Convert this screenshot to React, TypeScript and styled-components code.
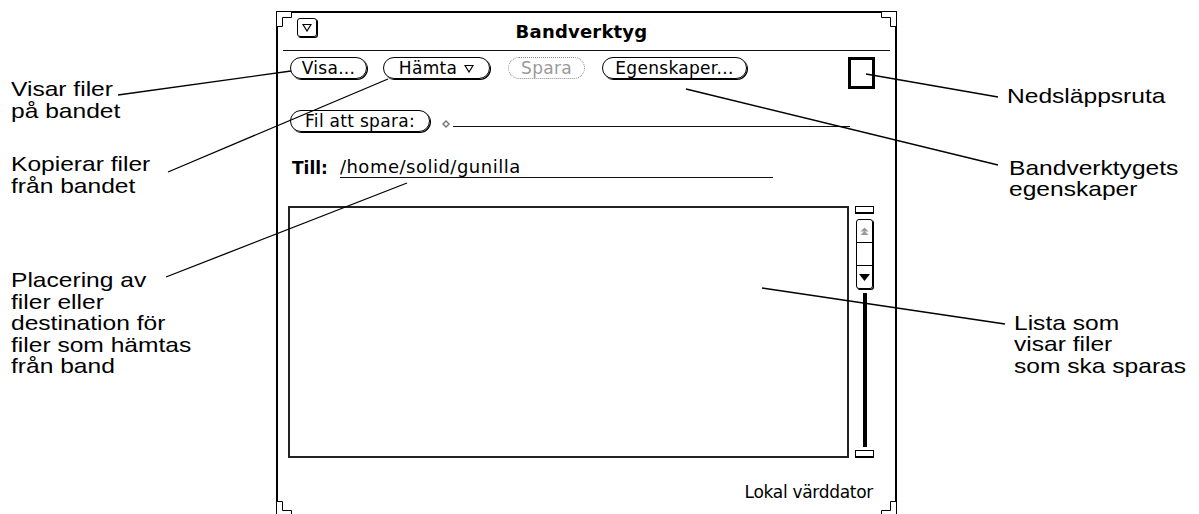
import React from 'react';
import styled, { createGlobalStyle } from 'styled-components';

const GlobalStyle = createGlobalStyle`
  html, body {
    margin: 0;
    padding: 0;
    background: #ffffff;
  }
  #root {
    width: 1199px;
    height: 514px;
    overflow: hidden;
  }
`;

const Page = styled.div`
  position: relative;
  display: grid;
  grid-template-columns: 276px 621px 1fr;
  align-items: start;
  width: 1199px;
  height: 514px;
  overflow: hidden;
  background: #fff;
  color: #000;
`;

/* callout texts left and right of the window */
const NoteColumn = styled.div<{ $pad: number }>`
  display: flex;
  flex-direction: column;
  align-items: flex-start;
  padding-left: ${(p) => p.$pad}px;
  font-family: 'Liberation Sans', Arial, Helvetica, sans-serif;
  font-size: 21px;
  line-height: 21.5px;
`;

const Note = styled.div<{ $top: number; $indent?: number }>`
  margin-top: ${(p) => p.$top}px;
  margin-left: ${(p) => p.$indent ?? 0}px;
  white-space: nowrap;
  transform: scaleX(1.17);
  transform-origin: left top;
`;

/* the OpenLook window */
const Window = styled.div`
  position: relative;
  box-sizing: border-box;
  margin-top: 11px;
  height: 506px;
  border: 2px solid #000;
  display: flex;
  flex-direction: column;
  font-family: 'DejaVu Sans', 'Liberation Sans', sans-serif;
  font-size: 17px;
  line-height: 20px;
`;

const Corner = styled.svg<{ $x: 'left' | 'right'; $y: 'top' | 'bottom' }>`
  position: absolute;
  width: 16px;
  height: 16px;
  ${(p) => (p.$x === 'left' ? 'left: -2px;' : 'right: -2px;')}
  ${(p) => (p.$y === 'top' ? 'top: -2px;' : 'bottom: -2px;')}
  transform: scale(${(p) => (p.$x === 'left' ? 1 : -1)}, ${(p) => (p.$y === 'top' ? 1 : -1)});
`;

const TitleBar = styled.div`
  display: grid;
  grid-template-columns: 60px 1fr 70px;
  align-items: start;
  height: 37px;
  box-sizing: border-box;
  padding-top: 5px;
`;

const MenuButton = styled.div`
  margin-left: 19px;
  width: 20px;
  height: 19px;
  box-sizing: border-box;
  border: 1px solid #000;
  border-radius: 3px;
  box-shadow: 1px 1px 0 #000;
  display: flex;
  align-items: center;
  justify-content: center;
`;

const Title = styled.div`
  margin-top: 4px;
  text-align: center;
  font-weight: bold;
  font-size: 18px;
  letter-spacing: 0.2px;
`;

const Separator = styled.div`
  height: 1px;
  margin: 0 5px;
  background: #111;
`;

const Controls = styled.div`
  display: flex;
  flex-direction: column;
  padding: 0 12px;
`;

const ButtonRow = styled.div`
  display: flex;
  align-items: flex-start;
  margin-top: 6px;
`;

const Button = styled.div<{ $w: number; $gap?: number; $dim?: boolean }>`
  box-sizing: border-box;
  width: ${(p) => p.$w}px;
  height: 22px;
  margin-left: ${(p) => p.$gap ?? 0}px;
  border: 1px ${(p) => (p.$dim ? 'dotted #8a8a8a' : 'solid #000')};
  border-radius: 11px;
  box-shadow: ${(p) => (p.$dim ? 'none' : '1px 1px 0 #000')};
  color: ${(p) => (p.$dim ? '#9a9a9a' : '#000')};
  display: flex;
  align-items: center;
  justify-content: center;
  gap: 7px;
  white-space: nowrap;
  line-height: 20px;
  letter-spacing: 0.3px;
`;

const DropBox = styled.div`
  margin-left: auto;
  margin-right: 8px;
  width: 27px;
  height: 32px;
  box-sizing: border-box;
  border: 3px solid #000;
`;

const FileRow = styled.div`
  display: flex;
  align-items: flex-end;
  margin-top: 21px;
`;

const Diamond = styled.svg`
  width: 8px;
  height: 8px;
  margin: 0 3px 4px 12px;
`;

const FieldLine = styled.div`
  flex: 1;
  height: 1px;
  margin: 0 33px 5px 0;
  background: #111;
`;

const TillRow = styled.div`
  display: flex;
  align-items: flex-end;
  margin-top: 25px;
`;

const FieldLabel = styled.span`
  margin-left: 2px;
  font-weight: bold;
`;

const FieldValue = styled.div`
  margin-left: 12px;
  width: 433px;
  border-bottom: 1px solid #111;
  font-size: 18px;
  letter-spacing: 0.5px;
`;

const ListRow = styled.div`
  display: flex;
  margin: 28px 0 0 -2px;
  height: 252px;
`;

const ListBox = styled.div`
  width: 561px;
  box-sizing: border-box;
  border: 2px solid #222;
  background: #fff;
`;

const ScrollColumn = styled.div`
  margin-left: 6px;
  width: 19px;
  display: flex;
  flex-direction: column;
  align-items: center;
`;

const Anchor = styled.div`
  width: 19px;
  height: 8px;
  box-sizing: border-box;
  border: 1px solid #000;
  border-bottom-width: 2px;
`;

const Elevator = styled.div`
  margin-top: 5px;
  width: 17px;
  height: 70px;
  box-sizing: border-box;
  border: 1px solid #000;
  border-radius: 3px;
  box-shadow: 1px 1px 0 #000;
  display: flex;
  flex-direction: column;
`;

const ElevatorCell = styled.div<{ $line?: boolean }>`
  flex: 1;
  display: flex;
  align-items: center;
  justify-content: center;
  border-top: ${(p) => (p.$line ? '1px solid #000' : 'none')};
`;

const Cable = styled.div`
  flex: 1;
  width: 4px;
  margin: 4px 0 3px;
  background: #000;
`;

const Footer = styled.div`
  margin-top: 24px;
  padding-right: 10px;
  text-align: right;
  letter-spacing: -0.3px;
`;

const Leaders = styled.svg`
  position: absolute;
  left: 0;
  top: 0;
  width: 1199px;
  height: 514px;
  pointer-events: none;
`;

const leaderLines: [number, number, number, number][] = [
  [118, 95, 291, 71],
  [168, 172, 388, 79],
  [166, 277, 407, 183],
  [866, 74, 998, 97],
  [686, 89, 998, 165],
  [762, 288, 1005, 324],
];

const OpenTriangle = () => (
  <svg width="10" height="9" viewBox="0 0 10 9">
    <path d="M1 1.5 H9 L5 8 Z" fill="none" stroke="#000" strokeWidth="1.2" />
  </svg>
);

const cornerPath = 'M0.5 0.5 H15.5 V6.5 H6.5 V15.5 H0.5 Z';

const App: React.FC = () => {
  return (
    <>
      <GlobalStyle />
      <Page>
        <NoteColumn $pad={11}>
          <Note $top={78}>
            Visar filer
            <br />
            på bandet
          </Note>
          <Note $top={32}>
            Kopierar filer
            <br />
            från bandet
          </Note>
          <Note $top={73}>
            Placering av
            <br />
            filer eller
            <br />
            destination för
            <br />
            filer som hämtas
            <br />
            från band
          </Note>
        </NoteColumn>

        <Window>
          <Corner $x="left" $y="top" viewBox="0 0 16 16">
            <path d={cornerPath} fill="#fff" stroke="#000" />
          </Corner>
          <Corner $x="right" $y="top" viewBox="0 0 16 16">
            <path d={cornerPath} fill="#fff" stroke="#000" />
          </Corner>
          <Corner $x="left" $y="bottom" viewBox="0 0 16 16">
            <path d={cornerPath} fill="#fff" stroke="#000" />
          </Corner>
          <Corner $x="right" $y="bottom" viewBox="0 0 16 16">
            <path d={cornerPath} fill="#fff" stroke="#000" />
          </Corner>

          <TitleBar>
            <MenuButton>
              <OpenTriangle />
            </MenuButton>
            <Title>Bandverktyg</Title>
            <span />
          </TitleBar>
          <Separator />

          <Controls>
            <ButtonRow>
              <Button $w={77}>Visa...</Button>
              <Button $w={107} $gap={16}>
                Hämta
                <OpenTriangle />
              </Button>
              <Button $w={77} $gap={18} $dim>
                Spara
              </Button>
              <Button $w={145} $gap={17}>
                Egenskaper...
              </Button>
              <DropBox />
            </ButtonRow>

            <FileRow>
              <Button $w={140}>Fil att spara:</Button>
              <Diamond viewBox="0 0 8 8">
                <path d="M4 0 L8 4 L4 8 L0 4 Z" fill="#777" />
                <path d="M4 2 L6 4 L4 6 L2 4 Z" fill="#fff" />
              </Diamond>
              <FieldLine />
            </FileRow>

            <TillRow>
              <FieldLabel>Till:</FieldLabel>
              <FieldValue>/home/solid/gunilla</FieldValue>
            </TillRow>

            <ListRow>
              <ListBox />
              <ScrollColumn>
                <Anchor />
                <Elevator>
                  <ElevatorCell>
                    <svg width="9" height="9" viewBox="0 0 9 9">
                      <path d="M4.5 0.5 L8.5 4.5 H0.5 Z" fill="#999" />
                      <path d="M4.5 4 L8.5 8 H0.5 Z" fill="#999" />
                    </svg>
                  </ElevatorCell>
                  <ElevatorCell $line />
                  <ElevatorCell $line>
                    <svg width="11" height="7" viewBox="0 0 11 7">
                      <path d="M0 0 H11 L5.5 7 Z" fill="#000" />
                    </svg>
                  </ElevatorCell>
                </Elevator>
                <Cable />
                <Anchor />
              </ScrollColumn>
            </ListRow>

            <Footer>Lokal värddator</Footer>
          </Controls>
        </Window>

        <NoteColumn $pad={110}>
          <Note $top={85}>Nedsläppsruta</Note>
          <Note $top={50} $indent={2}>
            Bandverktygets
            <br />
            egenskaper
          </Note>
          <Note $top={112} $indent={7}>
            Lista som
            <br />
            visar filer
            <br />
            som ska sparas
          </Note>
        </NoteColumn>

        <Leaders viewBox="0 0 1199 514">
          {leaderLines.map(([x1, y1, x2, y2], i) => (
            <line key={i} x1={x1} y1={y1} x2={x2} y2={y2} stroke="#000" strokeWidth="1.3" />
          ))}
        </Leaders>
      </Page>
    </>
  );
};

export default App;
